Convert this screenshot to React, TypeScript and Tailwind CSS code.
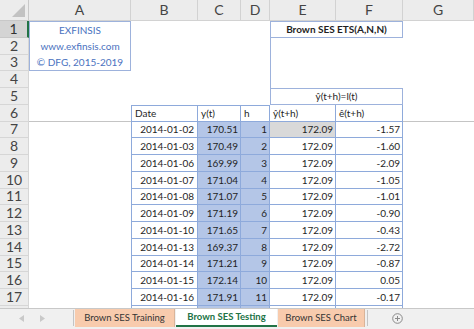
import React from "react";

type Row = [string, string, string, string, string];

const data: Row[] = [
  ["2014-01-02", "170.51", "1", "172.09", "-1.57"],
  ["2014-01-03", "170.49", "2", "172.09", "-1.60"],
  ["2014-01-06", "169.99", "3", "172.09", "-2.09"],
  ["2014-01-07", "171.04", "4", "172.09", "-1.05"],
  ["2014-01-08", "171.07", "5", "172.09", "-1.01"],
  ["2014-01-09", "171.19", "6", "172.09", "-0.90"],
  ["2014-01-10", "171.65", "7", "172.09", "-0.43"],
  ["2014-01-13", "169.37", "8", "172.09", "-2.72"],
  ["2014-01-14", "171.21", "9", "172.09", "-0.87"],
  ["2014-01-15", "172.14", "10", "172.09", "0.05"],
  ["2014-01-16", "171.91", "11", "172.09", "-0.17"],
  ["", "", "", "", ""],
];

const cell = "flex items-center px-[3px] text-[10px] leading-none text-[#1f1f1f] whitespace-nowrap overflow-hidden";
const rowHdr =
  "flex items-center justify-center bg-[#ececec] border-b border-r border-[#d6d6d6] text-[14px] leading-none text-[#444]";
const colHdr =
  "flex items-center justify-center bg-[#ececec] border-b border-r border-[#d2d2d2] text-[14px] leading-none text-[#444]";

function RH({ n, active }: { n: number | string; active?: boolean }) {
  return (
    <div
      className={
        active
          ? "flex items-center justify-center bg-[#d4d4d4] border-b border-[#c8c8c8] border-r-2 border-r-[#217346] text-[14px] leading-none text-[#333]"
          : rowHdr
      }
    >
      {n}
    </div>
  );
}

export default function App() {
  return (
    <div className="w-[474px] h-[329px] overflow-hidden bg-white flex flex-col font-[family-name:Lato,sans-serif]">
      <div className="h-[308px] shrink-0 overflow-hidden">
        <div className="grid grid-cols-[29px_102px_67px_43px_29px_66px_67px_71px] grid-rows-[21px_repeat(18,16.75px)]">
          {/* header row */}
          <div className="flex items-end justify-end bg-[#ececec] border-b border-r border-[#c8c8c8] pr-[3px] pb-[3px]">
            <svg width="13" height="13" viewBox="0 0 13 13">
              <polygon points="13,0 13,13 0,13" fill="#c2c2c2" />
            </svg>
          </div>
          {["A", "B", "C", "D", "E", "F", "G"].map((l) => (
            <div key={l} className={colHdr}>
              {l}
            </div>
          ))}

          {/* row 1 */}
          <RH n={1} active />
          <div className={`${cell} text-[10.5px] justify-center border-t border-l border-r border-[#9db2dc] text-[#4a72c0]`}>EXFINSIS</div>
          <div className={cell} />
          <div className={cell} />
          <div className={cell} />
          <div className={`${cell} text-[10.5px] col-span-2 justify-center border border-[#9db2dc] font-bold`}>Brown SES ETS(A,N,N)</div>
          <div className={cell} />

          {/* row 2 */}
          <RH n={2} />
          <div className={`${cell} text-[10.5px] justify-center border-l border-r border-[#9db2dc] text-[#4a72c0]`}>www.exfinsis.com</div>
          <div className={cell} />
          <div className={cell} />
          <div className={cell} />
          <div className={`${cell} border-l border-[#9db2dc]`} />
          <div className={cell} />
          <div className={cell} />

          {/* row 3 */}
          <RH n={3} />
          <div className={`${cell} text-[10.5px] justify-center border-l border-r border-b border-[#9db2dc] text-[#4a72c0]`}>© DFG, 2015-2019</div>
          <div className={cell} />
          <div className={cell} />
          <div className={cell} />
          <div className={`${cell} border-l border-[#9db2dc]`} />
          <div className={cell} />
          <div className={cell} />

          {/* row 4 */}
          <RH n={4} />
          <div className={cell} />
          <div className={cell} />
          <div className={cell} />
          <div className={cell} />
          <div className={`${cell} border-l border-[#9db2dc]`} />
          <div className={cell} />
          <div className={cell} />

          {/* row 5 */}
          <RH n={5} />
          <div className={cell} />
          <div className={cell} />
          <div className={cell} />
          <div className={cell} />
          <div className={`${cell} col-span-2 justify-center border border-[#9db2dc]`}>ŷ(t+h)=l(t)</div>
          <div className={cell} />

          {/* row 6 */}
          <RH n={6} />
          <div className={`${cell} border-b border-[#c4c4c4]`} />
          <div className={`${cell} border border-[#8eaadb]`}>Date</div>
          <div className={`${cell} border-t border-r border-b border-[#8eaadb]`}>y(t)</div>
          <div className={`${cell} border-t border-r border-b border-[#8eaadb]`}>h</div>
          <div className={`${cell} border-r border-b border-[#8eaadb]`}>ŷ(t+h)</div>
          <div className={`${cell} border-r border-b border-[#8eaadb]`}>ê(t+h)</div>
          <div className={`${cell} border-b border-[#c4c4c4]`} />

          {data.map((r, i) => (
            <React.Fragment key={i}>
              <RH n={i < 11 ? i + 7 : ""} />
              <div className={cell} />
              <div className={`${cell} justify-end border-l border-r border-b border-[#8eaadb]`}>{r[0]}</div>
              <div className={`${cell} justify-end bg-[#b4c6e7] border-r border-b border-[#8eaadb] pr-[2px]`}>{r[1]}</div>
              <div className={`${cell} justify-end bg-[#b4c6e7] border-r border-b border-[#8eaadb] pr-[2px]`}>{r[2]}</div>
              <div
                className={
                  i === 0
                    ? `${cell} justify-end bg-[#d9d9d9] border-r border-b border-[#8eaadb] pr-[2px]`
                    : `${cell} justify-end border-r border-b border-[#8eaadb] pr-[2px]`
                }
              >
                {r[3]}
              </div>
              <div className={`${cell} justify-end border-r border-b border-[#8eaadb] pr-[2px]`}>{r[4]}</div>
              <div className={cell} />
            </React.Fragment>
          ))}
        </div>
      </div>

      {/* sheet tabs */}
      <div className="h-[21px] shrink-0 bg-[#f0f0f0] border-t border-[#c8c8c8] flex items-start text-[9.5px] leading-none">
        <div className="w-[73px] h-[18px] flex items-center">
          <svg className="ml-[19px]" width="5" height="7" viewBox="0 0 5 7">
            <polygon points="5,0 5,7 0,3.5" fill="#c9c9c9" />
          </svg>
          <svg className="ml-[16px]" width="5" height="7" viewBox="0 0 5 7">
            <polygon points="0,0 0,7 5,3.5" fill="#c9c9c9" />
          </svg>
        </div>
        <div className="w-px h-[16px] mt-[1px] bg-[#c4c4c4]" />
        <div className="ml-[1px] w-[100px] h-[18px] bg-[#f8cbad] border-r border-[#d9b49a] flex items-center justify-center text-[#333]">
          Brown SES Training
        </div>
        <div className="ml-[1px] w-[101px] h-[18px] bg-white border-b-2 border-[#217346] flex items-center justify-center font-bold text-[#217346]">
          Brown SES Testing
        </div>
        <div className="ml-[1px] w-[87px] h-[18px] bg-[#f8cbad] border-r border-[#d9b49a] flex items-center justify-center text-[#333]">
          Brown SES Chart
        </div>
        <div className="ml-[2px] w-px h-[16px] mt-[1px] bg-[#c4c4c4]" />
        <div className="ml-[24px] h-[18px] flex items-center">
          <svg width="11" height="11" viewBox="0 0 11 11">
            <circle cx="5.5" cy="5.5" r="4.8" fill="none" stroke="#8a8a8a" strokeWidth="1" />
            <line x1="5.5" y1="3" x2="5.5" y2="8" stroke="#8a8a8a" strokeWidth="1" />
            <line x1="3" y1="5.5" x2="8" y2="5.5" stroke="#8a8a8a" strokeWidth="1" />
          </svg>
        </div>
      </div>
    </div>
  );
}
